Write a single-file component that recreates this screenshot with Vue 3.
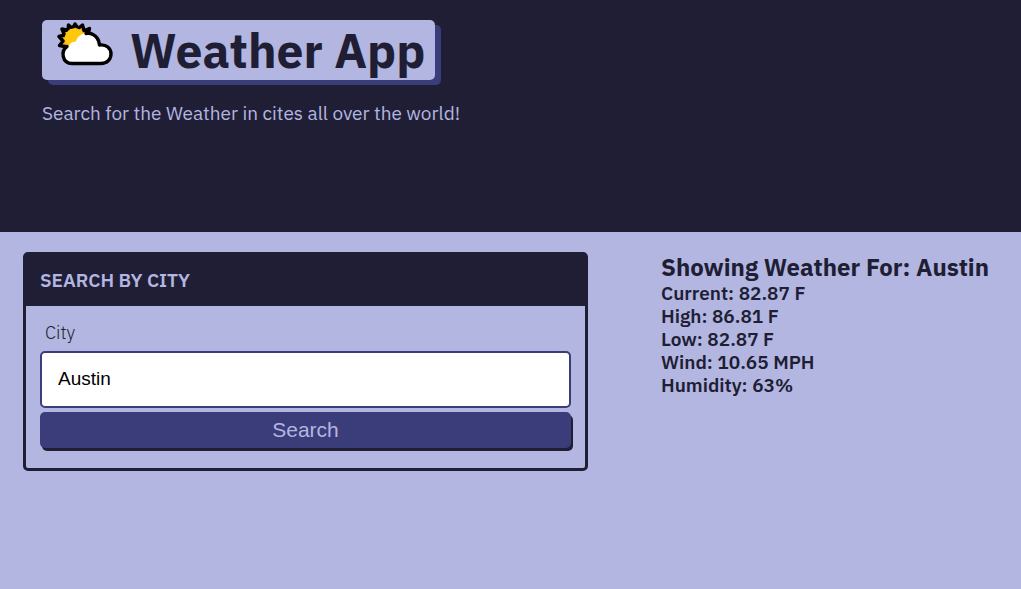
<script setup>
import { ref } from 'vue'

const city = ref('Austin')
const shownCity = ref('Austin')
const readings = [
  { label: 'Current', value: '82.87 F' },
  { label: 'High', value: '86.81 F' },
  { label: 'Low', value: '82.87 F' },
  { label: 'Wind', value: '10.65 MPH' },
  { label: 'Humidity', value: '63%' },
]

function search() {
  shownCity.value = city.value
}
</script>

<template>
  <div class="app">
    <header class="hero">
      <h1 class="title">
        <svg class="logo" viewBox="0 0 56 44" aria-hidden="true">
          <path
            d="M10 27 L8 24.500 L2.500 23.500 L6 19 L2 14.500 L7.500 13 L5 7 L11 8.500 L11.500 3 L15.500 6.500 L18 2 L21 6.500 L25.500 3 L27 8.500 L32.500 6.500 L31 12.500 L24 27 Z"
            fill="#fba919" stroke="#000" stroke-width="3.4" stroke-linejoin="round"
          />
          <path d="M9.500 22 A10 10 0 0 1 26 10.500 L20 27 Z" fill="#ffc80a" />
          <path
            d="M15 41.500 A9.5 9.5 0 0 1 12.500 23 C13.500 20.500 16 19.500 19 19.500 C21 12 29 9 36 12.500 C40 14.500 42 18.500 42.500 23 C49.500 22 54 26.500 54 32 C54 37.500 50 41.500 44 41.500 Z"
            fill="#fff"
          />
          <path
            d="M10 24.500 C3.500 29 5 41.500 15 41.500 L44 41.500 C50 41.500 54 37.500 54 32 C54 26.500 49.500 22 42.500 23 C42 18.500 40 14.500 36 12.500 C34 11.500 31.500 11 29 11.500"
            fill="none" stroke="#000" stroke-width="3.4" stroke-linecap="round" stroke-linejoin="round"
          />
        </svg>
        <span>Weather App</span>
      </h1>
      <p class="tagline">Search for the Weather in cites all over the world!</p>
    </header>

    <main class="content">
      <form class="card" @submit.prevent="search">
        <h2 class="card-title">Search by city</h2>
        <div class="card-body">
          <label class="label" for="city">City</label>
          <input id="city" v-model="city" class="field" type="text" />
          <button class="button" type="submit">Search</button>
        </div>
      </form>

      <section class="results">
        <h2 class="results-title">Showing Weather For: {{ shownCity }}</h2>
        <p v-for="item in readings" :key="item.label" class="reading">
          {{ item.label }}: {{ item.value }}
        </p>
      </section>
    </main>
  </div>
</template>

<style>
body {
  margin: 0;
  background: #b3b6e0;
}
</style>

<style scoped>
.app {
  color: #201e35;
  font-family: "IBM Plex Sans", "Noto Sans", sans-serif;
  font-size: 19px;
}

h1,
h2,
p {
  margin: 0;
}

.hero {
  box-sizing: border-box;
  min-height: 232px;
  padding: 20px 42px;
  background: #201e35;
}

.title {
  display: flex;
  align-items: center;
  gap: 17px;
  width: fit-content;
  padding: 0 10px 0 15px;
  border-radius: 5px;
  background: #b3b6e0;
  box-shadow: 6px 5px #3a3d7a;
  font-size: 48px;
  font-weight: 700;
  line-height: 60px;
}

.logo {
  width: 56px;
  height: 44px;
  margin-bottom: 12px;
}

.tagline {
  margin-top: 21px;
  color: #b3b6e0;
  line-height: 25px;
}

.content {
  display: grid;
  grid-template-columns: 565fr 337fr;
  align-items: start;
  gap: 73px;
  padding: 20px 23px;
}

.card {
  border: 3px solid #201e35;
  border-radius: 5px;
}

.card-title {
  padding: 14px;
  background: #201e35;
  color: #b3b6e0;
  font-size: 19px;
  font-weight: 600;
  line-height: 23px;
  text-transform: uppercase;
}

.card-body {
  display: flex;
  flex-direction: column;
  padding: 14px 14px 20px;
}

.label {
  padding: 0 5px;
  font-size: 18px;
  font-weight: 300;
  line-height: 26px;
}

.field {
  box-sizing: border-box;
  width: 100%;
  height: 57px;
  margin: 5px 0 4px;
  padding: 0 16px 2px;
  border: 2px solid #3a3d7a;
  border-radius: 5px;
  background: #fff;
  color: #000;
  font-family: "Liberation Sans", Arial, sans-serif;
  font-size: 19px;
}

.button {
  height: 36px;
  border: 0;
  border-radius: 5px;
  background: #3a3d7a;
  box-shadow: 2px 3px #201e35;
  color: #b3b6e0;
  font-family: "Liberation Sans", Arial, sans-serif;
  font-size: 21px;
}

.results-title {
  font-size: 24px;
  font-weight: 700;
  line-height: 30px;
}

.reading {
  font-size: 19px;
  font-weight: 600;
  line-height: 23px;
}
</style>
